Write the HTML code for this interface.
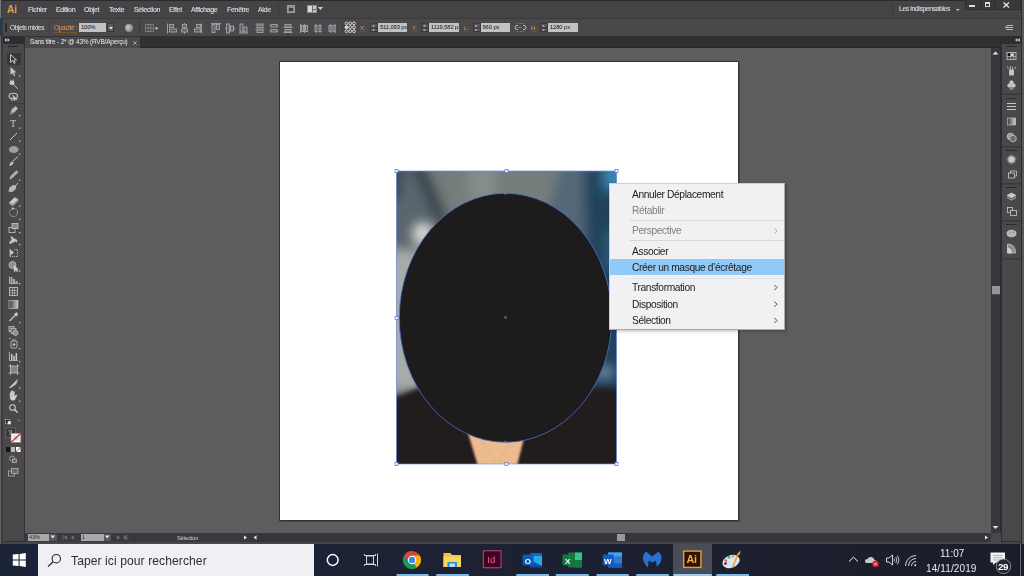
<!DOCTYPE html>
<html><head><meta charset="utf-8">
<style>
*{margin:0;padding:0;box-sizing:border-box}
html,body{width:1024px;height:576px;overflow:hidden;background:#2f2d30;font-family:"Liberation Sans",sans-serif;position:relative}
.a{position:absolute}
.t{position:absolute;white-space:nowrap;line-height:1;will-change:transform}
svg{position:absolute;overflow:visible}
.mt{color:#dddce0;font-size:7px;top:6.4px;letter-spacing:-0.3px;font-weight:normal;-webkit-text-stroke:0.15px #dddce0}
.sep{position:absolute;width:1px;background:#353337}
.inp{position:absolute;background:#c2c1c4;height:9px;top:23px;color:#111;font-size:5.8px;line-height:9.5px;padding-left:2px;letter-spacing:-0.1px;overflow:hidden;white-space:nowrap}
.spin{position:absolute;background:#575558;height:9px;top:23px;width:8px;border:1px solid #3a383b}
.ol{color:#e39a3a;font-size:6px;top:25px}
.cm{font-size:10.2px;color:#1b1b1d;letter-spacing:-0.36px}
.dis{color:#7e7e81}
</style></head><body>
<!-- left edge -->
<div class="a" style="left:0;top:0;width:3px;height:576px;background:#3c3a3d"></div>
<div class="a" style="left:0;top:0;width:1.3px;height:576px;background:#636164"></div>
<div class="a" style="left:0;top:0;width:1.3px;height:18px;background:#7a797c"></div>
<div class="a" style="left:0;top:18px;width:1.8px;height:18px;background:#1d3b5c"></div>

<!-- MENUBAR -->
<div class="a" style="left:2px;top:0;width:1019px;height:18px;background:#454346"></div>
<div class="a" style="left:2px;top:0;width:1022px;height:1px;background:#2c2a2d"></div>
<div class="t" style="left:7px;top:4px;font-size:10.5px;font-weight:bold;color:#e0a040;letter-spacing:-0.3px">Ai</div>
<div class="t mt" style="left:28px">Fichier</div>
<div class="t mt" style="left:56px">Edition</div>
<div class="t mt" style="left:84px">Objet</div>
<div class="t mt" style="left:109px">Texte</div>
<div class="t mt" style="left:134px">Sélection</div>
<div class="t mt" style="left:169px">Effet</div>
<div class="t mt" style="left:191px">Affichage</div>
<div class="t mt" style="left:227px">Fenêtre</div>
<div class="t mt" style="left:257.5px">Aide</div>
<div class="sep" style="left:278px;top:3px;height:13px;background:#3a383b"></div>
<!-- bridge icon -->
<div class="a" style="left:286.6px;top:4.9px;width:8.3px;height:8.5px;background:#8b8a8d;border:0.6px solid #9e9da0"></div>
<div class="a" style="left:289px;top:7.8px;width:3.6px;height:2.8px;background:#3e3d40"></div>
<!-- arrange docs icon -->
<div class="a" style="left:307px;top:5px;width:10px;height:8.4px;background:#6d6c6f;border:0.7px solid #8e8d90"></div>
<div class="a" style="left:308.3px;top:6.3px;width:3.6px;height:5.8px;background:#d8d7da"></div>
<div class="a" style="left:312.8px;top:6.3px;width:3px;height:2.4px;background:#c6c5c8"></div>
<div class="a" style="left:312.8px;top:9.7px;width:3px;height:2.4px;background:#c6c5c8"></div>
<svg style="left:318px;top:7px" width="5" height="4"><path d="M0 0H5L2.5 3Z" fill="#d0cfd2"/></svg>

<div class="sep" style="left:892px;top:3px;height:13px;background:#3a383b"></div>
<div class="t mt" style="left:899px;top:6.3px;color:#d4d3d6;font-size:6.9px;letter-spacing:-0.42px">Les indispensables</div>
<svg style="left:955.5px;top:8.5px" width="4" height="3"><path d="M0 0H3.6L1.8 2Z" fill="#d0cfd2"/></svg>
<!-- window buttons -->
<div class="a" style="left:965px;top:0;width:56px;height:10px;background:#3a383b;border:1px solid #2e2c2f;border-top:none"></div>
<div class="a" style="left:980px;top:0;width:1px;height:10px;background:#2e2c2f"></div>
<div class="a" style="left:994px;top:0;width:1px;height:10px;background:#2e2c2f"></div>
<div class="a" style="left:969px;top:5px;width:6px;height:2px;background:#dcdbde"></div>
<div class="a" style="left:985px;top:2px;width:5px;height:5px;border:1px solid #dcdbde;border-top-width:2px"></div>
<svg style="left:1003px;top:2px" width="7" height="6"><path d="M0.5 0.5L6 5.5M6 0.5L0.5 5.5" stroke="#e4e3e6" stroke-width="1.3"/></svg>
<div class="a" style="left:1021px;top:0;width:3px;height:576px;background:#5a585b"></div>
<div class="a" style="left:1021px;top:0;width:1px;height:576px;background:#2e2c2f"></div>

<!-- CONTROL BAR -->
<div class="a" style="left:3px;top:18px;width:1018px;height:18px;background:#4a484b;border-top:1px solid #3c3a3d"></div>
<div class="a" style="left:5px;top:23px;width:2px;height:9px;background:#2e2c2f"></div>
<div class="t" style="left:10px;top:24.6px;font-size:6.6px;color:#e4e3e6;letter-spacing:-0.45px">Objets mixtes</div>
<div class="sep" style="left:49px;top:21px;height:13px;background:#3d3b3e"></div>
<div class="t ol" style="left:54px;top:24.6px;font-size:6.6px;color:#e49a3c;letter-spacing:-0.35px;padding-bottom:0.3px;border-bottom:1px solid #7a5530">Opacité :</div>
<div class="inp" style="left:79px;width:27px">100%</div>
<div class="a" style="left:107px;top:23px;width:7px;height:9px;background:#5c5a5d;border:1px solid #3a383b"></div>
<svg style="left:108.5px;top:26.5px" width="4" height="3"><path d="M0 0H4L2 2.5Z" fill="#e8e7ea"/></svg>
<!-- globe -->
<div class="a" style="left:124.5px;top:24px;width:8px;height:8px;border-radius:50%;background:radial-gradient(circle at 40% 40%,#c9c8cb,#6a696c)"></div>
<div class="sep" style="left:139px;top:21px;height:13px;background:#3d3b3e"></div>
<svg style="left:0;top:0" width="1024" height="40">
<g fill="none" stroke="#b3b2b5" stroke-width="1">
<!-- grid icon -->
<rect x="145.5" y="24.5" width="8" height="7" stroke-dasharray="1 1" stroke="#a6a5a8"/>
<path d="M148.2 24.5V31.5M150.8 24.5V31.5M145.5 28H153.5" stroke-dasharray="1 1" stroke="#a6a5a8"/>
</g>
<path d="M154.5 27.5H158.5L156.5 30Z" fill="#c4c3c6"/>
<g fill="#605e61" stroke="#a6a5a8" stroke-width="0.9">
<!-- align left -->
<path d="M167.5 23.5V33.5" fill="none"/><rect x="169.5" y="24.5" width="4" height="3"/><rect x="169.5" y="29" width="7" height="3"/>
<!-- align center h -->
<path d="M184.5 23V34" fill="none"/><rect x="182.5" y="24.5" width="4" height="3"/><rect x="181.5" y="29" width="6" height="3"/>
<!-- align right -->
<path d="M201.5 23.5V33.5" fill="none"/><rect x="196.5" y="24.5" width="4" height="3"/><rect x="194.5" y="29" width="6" height="3"/>
<!-- align top -->
<path d="M211 23.5H221" fill="none"/><rect x="212" y="24.5" width="3" height="8"/><rect x="216.5" y="24.5" width="3" height="5"/>
<!-- align center v -->
<path d="M225 28.5H235" fill="none"/><rect x="226.5" y="24" width="3" height="9"/><rect x="230.5" y="26" width="3" height="5"/>
<!-- align bottom -->
<path d="M239 33H248" fill="none"/><rect x="240" y="24" width="3" height="8"/><rect x="244" y="27" width="3" height="5"/>
<!-- distribute top -->
<path d="M255.5 24H264.5M255.5 29H264.5" fill="none"/><rect x="257" y="25" width="6" height="2.5"/><rect x="257" y="30" width="6" height="2.5"/>
<!-- distribute center -->
<path d="M269.5 26H278.5M269.5 31H278.5" fill="none"/><rect x="271" y="24.5" width="6" height="2.5"/><rect x="271" y="29.5" width="6" height="2.5"/>
<!-- distribute bottom -->
<path d="M283.5 27.5H292.5M283.5 32.5H292.5" fill="none"/><rect x="285" y="24.5" width="6" height="2.5"/><rect x="285" y="29.5" width="6" height="2.5"/>
<!-- distribute left -->
<path d="M300.5 24V33M304.5 24V33" fill="none"/><rect x="301.5" y="25.5" width="2" height="6"/><rect x="305.5" y="25.5" width="2" height="6"/>
<!-- distribute center h -->
<path d="M316 24V33M320 24V33" fill="none"/><rect x="315" y="25.5" width="2" height="6"/><rect x="319" y="25.5" width="2" height="6"/>
<!-- distribute right -->
<path d="M331 24V33M335 24V33" fill="none"/><rect x="329" y="25.5" width="2" height="6"/><rect x="333" y="25.5" width="2" height="6"/>
</g>
<!-- reference point -->
<g fill="#48464a" stroke="#d2d1d4" stroke-width="1">
<path d="M346.5 23.4H354M346.5 31.2H354M346.5 23.4V31.2M354 23.4V31.2M350.2 23.4V31.2M346.5 27.3H354" stroke="#9d9c9f" stroke-width="0.8"/>
<circle cx="346.5" cy="23.4" r="1.4"/><circle cx="350.2" cy="23.4" r="1.4"/><circle cx="354" cy="23.4" r="1.4"/>
<circle cx="350.2" cy="27.3" r="1.4"/><circle cx="354" cy="27.3" r="1.4"/>
<circle cx="346.5" cy="31.2" r="1.4"/><circle cx="350.2" cy="31.2" r="1.4"/><circle cx="354" cy="31.2" r="1.4"/>
</g>
<circle cx="346.5" cy="27.3" r="1.8" fill="#dcdbde"/>
<!-- chain -->
<g fill="none" stroke="#bdbcbf" stroke-width="1">
<path d="M518 25.5H517A1.5 1.5 0 0 0 517 29.5H518M523 25.5H524A1.5 1.5 0 0 1 524 29.5H523"/>
<path d="M518.5 27.5H522.5" stroke-dasharray="1 1"/>
<path d="M518 23V24M520.5 23V24M523 23V24M518 31V32M520.5 31V32M523 31V32" stroke="#8a898c"/>
</g>
<!-- right control icon -->
<g fill="#b9b8bb">
<rect x="1007" y="25" width="6" height="1"/><rect x="1006" y="27" width="7" height="1"/><rect x="1006" y="29" width="7" height="1"/>
<path d="M1004.5 26.5H1008L1006.2 28.5Z"/>
</g>
</svg>
<div class="sep" style="left:341.5px;top:21px;height:13px;background:#3d3b3e"></div>
<div class="t ol" style="left:360px;border-bottom:1px solid #6e5032">X:</div>
<div class="spin" style="left:370px"></div>
<div class="inp" style="left:378px;width:29px">511,093 px</div>
<div class="t ol" style="left:412px;border-bottom:1px solid #6e5032">Y:</div>
<div class="spin" style="left:421px"></div>
<div class="inp" style="left:429px;width:30px">1119,582 px</div>
<div class="t ol" style="left:464px;border-bottom:1px solid #6e5032">L:</div>
<div class="spin" style="left:472.5px"></div>
<div class="inp" style="left:480.5px;width:29px">960 px</div>
<div class="t ol" style="left:530.5px;border-bottom:1px solid #6e5032">H:</div>
<div class="spin" style="left:540px"></div>
<div class="inp" style="left:548px;width:30px">1280 px</div>
<svg style="left:0;top:0" width="600" height="40">
<g fill="#cfcecf">
<path d="M372 26.5H375L373.5 25Z"/><path d="M372 29.5H375L373.5 31Z"/>
<path d="M423 26.5H426L424.5 25Z"/><path d="M423 29.5H426L424.5 31Z"/>
<path d="M474.5 26.5H477.5L476 25Z"/><path d="M474.5 29.5H477.5L476 31Z"/>
<path d="M542 26.5H545L543.5 25Z"/><path d="M542 29.5H545L543.5 31Z"/>
</g>
<g stroke="#2e2c2f" stroke-width="1"><path d="M371 28H377M422 28H428M473.5 28H479.5M541 28H547"/></g>
</svg>
<!-- TAB BAR -->
<div class="a" style="left:3px;top:36px;width:998px;height:12px;background:#323033"></div>
<div class="a" style="left:25px;top:47px;width:976px;height:1px;background:#2a282b"></div>
<div class="a" style="left:25px;top:37px;width:115px;height:11px;background:#4a484b"></div>
<div class="t" style="left:30px;top:39.3px;font-size:6.5px;color:#ebeaed;letter-spacing:-0.2px">Sans titre - 2* @ 43% (RVB/Aperçu)</div>
<svg style="left:133px;top:41px" width="4" height="4"><path d="M0.3 0.3L3.7 3.7M3.7 0.3L0.3 3.7" stroke="#a9a8ab" stroke-width="0.9"/></svg>

<!-- CANVAS -->
<div class="a" style="left:25px;top:48px;width:966px;height:485px;background:#5f5c60"></div>
<!-- artboard -->
<div class="a" style="left:279px;top:61px;width:459.5px;height:460px;background:#ffffff;border:1px solid #343135;border-right-color:#3a373b;box-shadow:0.5px 0.5px 1px rgba(40,38,42,0.4)"></div>
<!-- PHOTO -->
<svg style="left:0;top:0" width="1024" height="576">
<defs>
<filter id="bl" x="-50%" y="-50%" width="200%" height="200%"><feGaussianBlur stdDeviation="6"/></filter>
<filter id="bl2" x="-50%" y="-50%" width="200%" height="200%"><feGaussianBlur stdDeviation="2.5"/></filter>
<filter id="bl3" x="-50%" y="-50%" width="200%" height="200%"><feGaussianBlur stdDeviation="0.8"/></filter>
<clipPath id="ph"><rect x="396.5" y="171" width="220" height="293"/></clipPath>
</defs>
<g clip-path="url(#ph)">
<rect x="390" y="165" width="235" height="305" fill="#6a7476"/>
<g filter="url(#bl)">
<path d="M380 160H412L440 220L420 260H380Z" fill="#5a666d"/>
<path d="M380 160H405L400 200H380Z" fill="#3b4850"/>
<path d="M410 165L424 165L450 220L438 224Z" fill="#34414a"/>
<path d="M430 165L570 165L548 225L450 225Z" fill="#737d7c"/>
<path d="M466 165L498 165L494 215L472 215Z" fill="#838d8c"/>
<path d="M562 165L640 165L640 300L545 300L546 215Z" fill="#536878"/>
<path d="M584 165L640 165L640 400L588 400Z" fill="#23425b"/>
<rect x="604" y="165" width="20" height="25" fill="#3a87b2"/>
<rect x="606" y="230" width="14" height="40" fill="#2e5f80"/>
<ellipse cx="423" cy="234" rx="9" ry="10" fill="#e2e5e3"/>
<rect x="385" y="250" width="40" height="140" fill="#a7aca9"/>
<ellipse cx="604" cy="372" rx="9" ry="5" fill="#7096ab"/>
</g>
<g filter="url(#bl2)">
<path d="M380 398L396 396.5Q408 392 420 387L470 400L540 400L592 388Q608 386 630 390L630 480L380 480Z" fill="#201d1f"/>
<path d="M405 400L412 470M430 396L440 470" stroke="#262324" stroke-width="3"/>
</g>
<g filter="url(#bl3)"><path d="M467 430L526 430L517 466L478 466Z" fill="#ecbb8e"/></g>
<path d="M478 436L496 462M514 436L498 462" stroke="#c9a080" stroke-width="0.4" fill="none"/>
</g>
<!-- ellipse -->
<ellipse cx="505.5" cy="317.8" rx="106.2" ry="124.5" fill="#1e1b1d" stroke="#4a70d0" stroke-width="0.8"/>
<!-- bounding box -->
<rect x="396.5" y="171" width="220" height="293" fill="none" stroke="#7090e8" stroke-width="0.7"/>
<g fill="#ffffff" stroke="#5b7ee0" stroke-width="0.8">
<rect x="395" y="169.5" width="3" height="3"/><rect x="505" y="169.5" width="3" height="3"/><rect x="615" y="169.5" width="3" height="3"/>
<rect x="395" y="316.3" width="3" height="3"/><rect x="615" y="316.3" width="3" height="3"/>
<rect x="395" y="462.5" width="3" height="3"/><rect x="505" y="462.5" width="3" height="3"/><rect x="615" y="462.5" width="3" height="3"/>
</g>
<rect x="504.5" y="316.5" width="2" height="2" fill="#5b7ee0"/>
<rect x="504.5" y="192.5" width="2" height="2" fill="#5b7ee0"/>
<rect x="504.5" y="441" width="2" height="2" fill="#5b7ee0"/>
</svg>
<!-- CONTEXT MENU -->
<div class="a" style="left:609px;top:184px;width:178px;height:148px;background:rgba(0,0,0,0.18);filter:blur(1px)"></div>
<div class="a" style="left:608.5px;top:183px;width:176.5px;height:147px;background:#f1f0f3;border:1px solid #cfcfd2;border-right-color:#a9a9ac;border-bottom-color:#a9a9ac"></div>
<div class="a" style="left:610px;top:258.5px;width:174px;height:16.5px;background:#91c9f7"></div>
<div class="a" style="left:630px;top:220px;width:154px;height:1px;background:#d6d6d9"></div>
<div class="a" style="left:630px;top:240px;width:154px;height:1px;background:#d6d6d9"></div>
<div class="a" style="left:630px;top:278px;width:154px;height:1px;background:#e2e2e5"></div>
<div class="t cm" style="left:632px;top:189.8px">Annuler Déplacement</div>
<div class="t cm dis" style="left:632px;top:206.3px">Rétablir</div>
<div class="t cm dis" style="left:632px;top:226.3px">Perspective</div>
<div class="t cm" style="left:632px;top:246.6px">Associer</div>
<div class="t cm" style="left:632px;top:263.0px">Créer un masque d’écrêtage</div>
<div class="t cm" style="left:632px;top:283.3px">Transformation</div>
<div class="t cm" style="left:632px;top:299.9px">Disposition</div>
<div class="t cm" style="left:632px;top:316.1px">Sélection</div>
<svg style="left:0;top:0" width="1024" height="576">
<g fill="none" stroke-width="0.9">
<path d="M774.5 228.5L777 231L774.5 233.5" stroke="#a8a8ab"/>
<path d="M774.5 285L777 287.5L774.5 290" stroke="#333"/>
<path d="M774.5 301.7L777 304.2L774.5 306.7" stroke="#333"/>
<path d="M774.5 318L777 320.5L774.5 323" stroke="#333"/>
</g>
</svg>
<!-- LEFT TOOLBAR -->
<div class="a" style="left:3px;top:36px;width:22px;height:505px;background:#4a484b"></div>
<div class="a" style="left:3px;top:36px;width:22px;height:8px;background:#2f2d30"></div>
<div class="a" style="left:24px;top:44px;width:1px;height:497px;background:#343235"></div>
<div class="a" style="left:8px;top:46px;width:10px;height:1px;background:#242225"></div>
<div class="a" style="left:6.5px;top:53px;width:14px;height:11.5px;background:#39373a"></div>
<div class="a" style="left:5px;top:103px;width:19px;height:1px;background:#3f3d40"></div>
<svg style="left:0;top:0" width="30" height="576">
<path d="M5 38.3V41.7L7.3 40ZM7.5 38.3V41.7L9.8 40Z" fill="#d8d7da"/>
<g fill="none" stroke="#d0cfd2" stroke-width="0.9">
<!-- selection outline -->
<path d="M10.5 54.5V62.5L12.5 60.5L14 63.5L15.3 62.8L13.8 60H16.5Z"/>
</g>
<g fill="#c8c7ca">
<!-- direct selection -->
<path d="M10.5 67V75L12.5 73L14 76L15.3 75.3L13.8 72.5H16.5Z"/>
</g>
<g fill="#c2c1c4">
<!-- corner dots -->
<rect x="19" y="75.5" width="1.3" height="1.3"/>
<rect x="19" y="115" width="1.3" height="1.3"/>
<rect x="19" y="127.5" width="1.3" height="1.3"/>
<rect x="19" y="140.5" width="1.3" height="1.3"/>
<rect x="19" y="153.5" width="1.3" height="1.3"/>
<rect x="19" y="179.5" width="1.3" height="1.3"/>
<rect x="19" y="205.5" width="1.3" height="1.3"/>
<rect x="19" y="218.5" width="1.3" height="1.3"/>
<rect x="19" y="232" width="1.3" height="1.3"/>
<rect x="19" y="244" width="1.3" height="1.3"/>
<rect x="19" y="270.5" width="1.3" height="1.3"/>
<rect x="19" y="283" width="1.3" height="1.3"/>
<rect x="19" y="322" width="1.3" height="1.3"/>
<rect x="19" y="348" width="1.3" height="1.3"/>
<rect x="19" y="361" width="1.3" height="1.3"/>
<rect x="19" y="387.5" width="1.3" height="1.3"/>
<rect x="19" y="400.5" width="1.3" height="1.3"/>
</g>
<g stroke="#c8c7ca" fill="none" stroke-width="1">
<!-- magic wand -->
<path d="M13 84L17.8 88.8" stroke-width="0.9"/>
<circle cx="12" cy="82.8" r="2.4" fill="#c8c7ca" stroke="none"/>
<path d="M10.5 79.5L11.2 81M13.8 79.5L13 81M9 83H9.8M15 83H14.2" stroke-width="0.7"/>
<!-- lasso -->
<ellipse cx="13.3" cy="96" rx="4.2" ry="2.8" stroke-width="1.1"/>
<path d="M12.5 95L14.2 101L15.2 99.3L17.5 99.5Z" fill="#c8c7ca" stroke-width="0.4"/>
<path d="M11.5 98.5L12 101" stroke-width="0.9"/>
<!-- pen -->
<path d="M10.5 114.5L12 109.5L15.5 106.5L17.5 108.5L14.5 112Z" fill="#bdbcbf" stroke-width="0.6"/>
<path d="M10.5 114.5L13 111.8" stroke="#4a484b" stroke-width="0.7"/>
<!-- line -->
<path d="M10 140L17 133" stroke-width="1"/>
</g>
<!-- type T -->
<text x="10.2" y="127" font-family="Liberation Serif" font-size="9.5" fill="#d0cfd2">T</text>
<g fill="#9e9da0">
<!-- ellipse -->
<ellipse cx="13.7" cy="149.5" rx="4.8" ry="3.6"/>
</g>
<g stroke="#c8c7ca" fill="none">
<!-- brush -->
<path d="M13 161L18 156.5" stroke-width="1"/>
<path d="M9.5 165.8Q10 162.5 12.3 161.5L13.5 162.8Q12.5 165.5 9.5 165.8Z" fill="#c8c7ca" stroke-width="0.4"/>
<!-- pencil -->
<path d="M10 179L11 176L16.5 170.8L18 172.3L12.5 177.5Z" fill="#a9a8ab" stroke-width="0.7"/>
<!-- blob brush -->
<path d="M9 191.5L9.8 187.5L13 185.5Q15 185 16 186.5L15 189.5L12.5 191.5Z" fill="#b6b5b8" stroke-width="0.6"/>
<path d="M14 187.5L18 183" stroke-width="0.9"/>
<!-- eraser -->
<path d="M9.5 202.5L14.5 197.5L18 199.5L13 204.5Z" fill="#c8c7ca" stroke-width="0.6"/>
<path d="M9.5 202.5L13 204.5L18 199.5V201L13 206L9.5 204Z" fill="#8a898c" stroke-width="0.3"/>
<!-- rotate -->
<circle cx="13.5" cy="212.5" r="4" stroke-dasharray="1.3 1" stroke-width="1"/>
<path d="M12 207.5L14 208.5L12 209.8" fill="#c8c7ca" stroke-width="0.5"/>
<!-- scale -->
<rect x="9" y="227.5" width="6" height="5" stroke-width="0.8"/>
<rect x="12" y="223.5" width="6" height="5" fill="#8a898c" stroke-width="0.8"/>
<!-- warp -->
<path d="M9.5 242.5Q10.5 240.5 12 240Q11.5 238 10.8 236.5Q13.2 236.8 14 239Q15.5 238.5 16.8 240Q17.5 242 16.2 242.2Q15.5 240.8 14.5 241.5Q13 243 11.5 242.5Q10.5 243.5 9.5 242.5Z" fill="#c8c7ca" stroke-width="0.5"/>
<circle cx="10.5" cy="243" r="1" fill="#c8c7ca" stroke="none"/>
<!-- free transform -->
<path d="M10 249V256.5M10 252.5H12M14 249.5H17.5V256.5M10 256.5H17.5" stroke-width="0.8" stroke-dasharray="1.2 0.8"/>
<path d="M10 249.5L14 252.5L10 255.5Z" fill="#c8c7ca" stroke-width="0.3"/>
<!-- shape builder -->
<circle cx="12.5" cy="265" r="3.5" fill="#8f8e91" stroke-width="0.7"/>
<path d="M14 265L14 272L15.8 270.5L17.5 272L18 271L16.5 269.5H18.5Z" fill="#d0cfd2" stroke-width="0.3"/>
<!-- perspective / bars -->
<path d="M9.5 276.5V283.5H18" stroke-width="0.8"/>
<rect x="10.5" y="277" width="2" height="6" fill="#a6a5a8" stroke="none"/>
<rect x="13" y="279" width="2" height="4" fill="#a6a5a8" stroke="none"/>
<rect x="15.5" y="281" width="2" height="2" fill="#a6a5a8" stroke="none"/>
<!-- mesh -->
<rect x="9.5" y="287.5" width="8" height="8" stroke-width="0.8"/>
<path d="M9.5 290.5H17.5M9.5 293H17.5M12.5 287.5V295.5M14.5 287.5V295.5" stroke-width="0.6"/>
<!-- gradient -->
</g>
<defs><linearGradient id="gr" x1="0" x2="1"><stop offset="0" stop-color="#3e3d40"/><stop offset="1" stop-color="#c9c8cb"/></linearGradient></defs>
<rect x="9" y="300.5" width="9" height="8" fill="url(#gr)" stroke="#c8c7ca" stroke-width="0.6"/>
<g stroke="#c8c7ca" fill="none">
<!-- eyedropper -->
<path d="M9.5 321L14.5 316" stroke-width="1.2"/>
<path d="M14 314.5L16.5 312.5L18 314L16 316.5Z" fill="#c8c7ca" stroke-width="0.6"/>
<!-- blend -->
<rect x="9" y="326.5" width="5" height="5" fill="#6e6d70" stroke-width="0.7"/>
<rect x="11" y="328.5" width="5" height="5" fill="#6e6d70" stroke-width="0.7"/>
<circle cx="15.5" cy="333" r="2.5" fill="#8b8a8d" stroke-width="0.7"/>
<!-- symbol sprayer -->
<rect x="11" y="341" width="6" height="7" rx="1" stroke-width="0.8"/>
<path d="M13 339V341M15 339V341M9 338.5H11" stroke-width="0.7"/>
<circle cx="14" cy="344.5" r="1.3" fill="#c8c7ca" stroke="none"/>
<!-- graph -->
<path d="M9.5 352V360.5H18" stroke-width="0.8"/>
<rect x="11" y="354" width="1.5" height="6" fill="#c8c7ca" stroke="none"/>
<rect x="13.3" y="356" width="1.5" height="4" fill="#c8c7ca" stroke="none"/>
<rect x="15.6" y="353" width="1.5" height="7" fill="#c8c7ca" stroke="none"/>
<!-- artboard -->
<rect x="10.5" y="366" width="7" height="7" fill="#858487" stroke="none"/>
<path d="M8.5 366H19.5M8.5 373H19.5M10.5 364V375M17.5 364V375" stroke-width="0.7"/>
<!-- slice -->
<path d="M9.5 387.5L17.5 379.5L16 384L11 387.5Z" fill="#c8c7ca" stroke-width="0.6"/>
<!-- hand -->
<path d="M10 397V393.5Q10 392.5 11 392.5V396M11 396V391.5Q11.2 390.8 12 391V395.5M12 395.5V391Q12.5 390.3 13.2 391V395.5M13.2 395.5V391.8Q13.8 391.2 14.4 391.8V396.5L15.8 395Q16.8 394.5 17 395.4L14.5 400.2H11.5Q10 399.5 10 397Z" fill="#d0cfd2" stroke-width="0.4"/>
<!-- zoom -->
<circle cx="12.5" cy="407.5" r="2.8" stroke-width="1.1"/>
<path d="M14.5 409.5L17.5 412.5" stroke-width="1.6"/>
</g>
<!-- swap/default -->
<rect x="5.5" y="419.5" width="4" height="4" fill="#111" stroke="#ddd" stroke-width="0.5"/>
<rect x="7.5" y="421" width="3.5" height="3.5" fill="#eee" stroke="#444" stroke-width="0.4"/>
<path d="M17 419.5Q19.5 419.5 19.5 422" fill="none" stroke="#8e8d90" stroke-width="0.7"/>
<!-- fill/stroke -->
<rect x="5.8" y="428" width="9.8" height="9.5" fill="#3a383b" stroke="#6d6c6f" stroke-width="0.7"/>
<text x="8.3" y="435" font-size="7" fill="#e2e1e4" font-family="Liberation Sans">?</text>
<rect x="11" y="433.3" width="9.8" height="9.1" fill="#f4f4f4" stroke="#8d8c8f" stroke-width="0.5"/>
<rect x="13.3" y="435.6" width="5.2" height="4.5" fill="#d8d8d8"/>
<path d="M10.8 442.6L21 433.2" stroke="#e02020" stroke-width="1.2"/>
<!-- color modes -->
<rect x="6" y="447" width="4" height="5" fill="#141414"/>
<rect x="11" y="447" width="4" height="5" fill="#b9b8bb"/>
<rect x="16" y="447" width="4.5" height="5" fill="#ffffff"/>
<path d="M16 452L20.5 447" stroke="#e02020" stroke-width="0.9"/>
<!-- drawing modes -->
<g fill="none" stroke="#b3b2b5" stroke-width="0.8">
<circle cx="12" cy="458.5" r="2.5"/><rect x="12.5" y="459" width="4" height="3.5" fill="#6a696c"/>
<!-- screen mode -->
<rect x="8.5" y="471" width="6" height="5"/><rect x="11.5" y="468.5" width="6.5" height="5" fill="#6a696c"/>
</g>
</svg>
<!-- RIGHT DOCK -->
<div class="a" style="left:991px;top:48px;width:9px;height:485px;background:#38363a"></div>
<div class="a" style="left:1000px;top:36px;width:2px;height:505px;background:#2e2c2f"></div>
<div class="a" style="left:1002px;top:36px;width:19px;height:505px;background:#4a484b"></div>
<div class="a" style="left:1002px;top:36px;width:19px;height:8px;background:#2f2d30"></div>
<svg style="left:0;top:0" width="1024" height="576">
<path d="M1017.3 38.3V41.7L1015 40ZM1019.8 38.3V41.7L1017.5 40Z" fill="#d8d7da"/>
<!-- scroll arrows -->
<path d="M992.5 54.5H998.5L995.5 51.5Z" fill="#e0dfe2"/>
<path d="M992.5 526H998.5L995.5 529Z" fill="#e0dfe2"/>
<rect x="992" y="286" width="8" height="8.3" fill="#959496"/>
<!-- group separators -->
<g fill="#3a383b">
<rect x="1002" y="93.5" width="19" height="1.5"/>
<rect x="1002" y="146" width="19" height="1.5"/>
<rect x="1002" y="183" width="19" height="1.5"/>
<rect x="1002" y="220" width="19" height="1.5"/>
<rect x="1002" y="258" width="19" height="1.5"/>
</g>
<g fill="#2a282b">
<rect x="1006" y="46" width="11" height="1"/>
<rect x="1006" y="98" width="11" height="1"/>
<rect x="1006" y="150" width="11" height="1"/>
<rect x="1006" y="187" width="11" height="1"/>
<rect x="1006" y="224" width="11" height="1"/>
</g>
<!-- swatches -->
<rect x="1007" y="52.5" width="9" height="7" fill="none" stroke="#c8c7ca" stroke-width="0.8"/>
<rect x="1008" y="53.5" width="2.5" height="2.5" fill="#111"/><rect x="1011" y="53.5" width="2.5" height="2.5" fill="#ddd"/>
<path d="M1007 56.5H1016M1010.5 52.5V59.5M1013.5 52.5V59.5" stroke="#c8c7ca" stroke-width="0.6"/>
<g fill="none" stroke="#c8c7ca" stroke-width="0.8">
<!-- brushes -->
<rect x="1009.5" y="70" width="4" height="5" fill="#c8c7ca"/>
<path d="M1010.5 70V66M1012.5 70V66.5M1014.5 69L1016 66.5M1008.5 69L1007.5 66.5"/>
<!-- symbols club -->
<circle cx="1011.5" cy="82.5" r="1.8" fill="#c8c7ca"/><circle cx="1009.5" cy="85.5" r="1.8" fill="#c8c7ca"/><circle cx="1013.5" cy="85.5" r="1.8" fill="#c8c7ca"/>
<path d="M1011.5 85V89M1009.5 89H1013.5"/>
<!-- stroke lines -->
<path d="M1007 103.5H1016M1007 106.5H1016M1007 109.5H1016" stroke-width="1.1"/>
<!-- gradient -->
</g>
<defs><linearGradient id="gr2" x1="0" x2="1"><stop offset="0" stop-color="#3e3d40"/><stop offset="1" stop-color="#d0cfd2"/></linearGradient></defs>
<rect x="1007.5" y="118" width="8" height="7" fill="url(#gr2)" stroke="#c8c7ca" stroke-width="0.6"/>
<g fill="none" stroke="#c8c7ca" stroke-width="0.8">
<!-- transparency -->
<circle cx="1010.5" cy="136.5" r="3.3" fill="#9a999c"/>
<circle cx="1013" cy="138.5" r="3.3" fill="#6c6b6e"/>
<!-- appearance -->
<circle cx="1011.5" cy="159.5" r="3.2" fill="#c8c7ca" stroke-dasharray="1 0.8"/>
<circle cx="1011.5" cy="159.5" r="4.3" stroke-dasharray="0.8 0.8"/>
<!-- graphic styles -->
<rect x="1008.5" y="173" width="6" height="5"/>
<path d="M1010.5 173V171H1016.5V176H1014.5"/>
<!-- layers -->
<path d="M1011.5 193L1016 195.5L1011.5 198L1007 195.5Z" fill="#c8c7ca"/>
<path d="M1007 197.5L1011.5 200L1016 197.5"/>
<!-- artboards -->
<rect x="1007.5" y="207.5" width="5" height="5"/><rect x="1010.5" y="210.5" width="6" height="5" fill="#4a484b"/>
<!-- color -->
<ellipse cx="1011.5" cy="233.5" rx="4.5" ry="3.3" fill="#b9b8bb"/>
<circle cx="1010" cy="232.5" r="0.9" fill="#444"/><circle cx="1013" cy="232.5" r="0.9" fill="#444"/>
<!-- color guide -->
<path d="M1007.5 253V244Q1015.5 244 1015.5 253Z" fill="#8f8e91"/>
<path d="M1007.5 253V248Q1011.5 248 1011.5 253Z" fill="#d0cfd2"/>
</g>
</svg>

<!-- STATUS BAR -->
<div class="a" style="left:25px;top:533px;width:966px;height:8.5px;background:#3b393c"></div>
<div class="a" style="left:250px;top:533px;width:741px;height:8.5px;background:#373538"></div>
<div class="a" style="left:991px;top:533px;width:10px;height:8.5px;background:#4a484b"></div>
<div class="a" style="left:616.5px;top:533.5px;width:8px;height:7.5px;background:#9a999b"></div>
<div class="a" style="left:28px;top:533.5px;width:21px;height:7.5px;background:#a9a8ab"></div>
<div class="t" style="left:29px;top:535px;font-size:5.5px;color:#2a2a2a">43%</div>
<div class="a" style="left:49px;top:533.5px;width:7.5px;height:7.5px;background:#59575a"></div>
<div class="a" style="left:80.5px;top:533.5px;width:23px;height:7.5px;background:#a9a8ab"></div>
<div class="t" style="left:82px;top:535px;font-size:5.5px;color:#2a2a2a">1</div>
<div class="a" style="left:103.5px;top:533.5px;width:7.5px;height:7.5px;background:#59575a"></div>
<div class="a" style="left:133.5px;top:533px;width:1px;height:8.5px;background:#2f2d30"></div>
<div class="t" style="left:176.5px;top:535.8px;font-size:5.6px;color:#d5d4d7;letter-spacing:-0.22px">Sélection</div>
<div class="a" style="left:3px;top:541.5px;width:1018px;height:2px;background:#48464a"></div>
<svg style="left:0;top:0" width="1024" height="576">
<path d="M50.5 535.5H55L52.75 538.5Z" fill="#e8e7ea"/>
<path d="M105 535.5H109.5L107.25 538.5Z" fill="#e8e7ea"/>
<g fill="#6f6e71"><path d="M63 535V540M64 537.5L67 535V540Z"/><path d="M74 535V540L71 537.5Z"/><path d="M117 535V540L120 537.5Z"/><path d="M126 535V540L123 537.5ZM127 535V540"/></g>
<g stroke="#6f6e71" stroke-width="0.8"><path d="M63 535V540M127 535V540"/></g>
<path d="M244 535.5V539.5L247 537.5Z" fill="#e8e7ea"/>
<path d="M256.5 535.3V539.7L253.5 537.5Z" fill="#e8e7ea"/>
<path d="M985 535.5V539.5L988 537.5Z" fill="#e8e7ea"/>
</svg>
<!-- TASKBAR -->
<div class="a" style="left:0;top:543.5px;width:1024px;height:32.5px;background:linear-gradient(90deg,#1b2339 0%,#1c2234 40%,#1c202e 75%,#1a1e2a 100%)"></div>
<div class="a" style="left:37.5px;top:543.5px;width:276px;height:32.5px;background:#f0eff3"></div>
<div class="t" style="left:71px;top:555px;font-size:12.1px;color:#2e2e30;letter-spacing:0.08px">Taper ici pour rechercher</div>
<div class="a" style="left:673.4px;top:543.5px;width:38.5px;height:32.5px;background:#4a4d57"></div>
<svg style="left:0;top:0" width="1024" height="576">
<!-- windows logo -->
<g fill="#ffffff">
<path d="M12.8 554.6L18.6 554V559.6H12.8Z"/><path d="M19.6 553.9L25.8 553V559.6H19.6Z"/>
<path d="M12.8 560.4H18.6V566L12.8 565.4Z"/><path d="M19.6 560.4H25.8V567L19.6 566.1Z"/>
</g>
<!-- search icon -->
<circle cx="56.3" cy="558.7" r="4.2" fill="none" stroke="#2b2b2b" stroke-width="1.1"/>
<path d="M53.3 561.7L48 566.5" stroke="#2b2b2b" stroke-width="1.2"/>
<!-- cortana -->
<circle cx="332.7" cy="560" r="5.4" fill="none" stroke="#ffffff" stroke-width="1.5"/>
<!-- task view -->
<g fill="none" stroke="#d8d8da" stroke-width="1">
<rect x="366.5" y="556" width="7" height="8"/>
<path d="M364.5 554V555.5H375.5V554M364.5 566V564.5H375.5V566M377.5 553.5V566.5"/>
</g>
<!-- chrome -->
<circle cx="412" cy="560" r="9" fill="#db4437"/>
<path d="M412 560L404.2 564.5A9 9 0 0 0 416.5 567.8Z" fill="#0f9d58"/>
<path d="M412 560L416.5 567.8A9 9 0 0 0 419.8 555.5L412 555.5Z" fill="#f4b400"/>
<path d="M412 560L412 551A9 9 0 0 0 404.2 555.5L408.1 562.25Z" fill="#db4437"/>
<path d="M404.2 564.5A9 9 0 0 1 404.2 555.5L408.1 562.25Z" fill="#0f9d58"/>
<circle cx="412" cy="560" r="4.2" fill="#ffffff"/>
<circle cx="412" cy="560" r="3.2" fill="#4285f4"/>
<!-- explorer -->
<path d="M443.5 553H450.5L452 555H461V567H443.5Z" fill="#f5c342"/>
<rect x="443.5" y="556.5" width="17.5" height="10.5" fill="#fbd55b"/>
<rect x="447.5" y="562" width="9.5" height="5" fill="#2b8fd8"/>
<rect x="449.5" y="563.5" width="5.5" height="3.5" fill="#b9dff8"/>
<!-- indesign -->
<rect x="483.3" y="550.8" width="17.7" height="17" fill="#3f0420" stroke="#e8508f" stroke-width="0.8"/>
<text x="487.3" y="563.3" font-family="Liberation Sans" font-size="9.6" fill="#f0609f">Id</text>
<!-- outlook -->
<rect x="530" y="553" width="12" height="14" rx="1" fill="#1066c3"/>
<rect x="533" y="556" width="9" height="10" fill="#28a8ea"/>
<path d="M530 560L542 566V567.5H530Z" fill="#0b4fa8"/>
<rect x="522.5" y="554.5" width="11" height="11" rx="1" fill="#0a5cb8"/>
<text x="524.8" y="563.5" font-family="Liberation Sans" font-size="8" font-weight="bold" fill="#ffffff">O</text>
<!-- excel -->
<rect x="568" y="552.5" width="14" height="15" rx="1" fill="#1d6f42"/>
<rect x="575" y="552.5" width="7" height="7.5" fill="#33c481"/>
<rect x="575" y="560" width="7" height="7.5" fill="#107c41"/>
<rect x="562.5" y="554.5" width="11" height="11" rx="1" fill="#107c41"/>
<text x="565" y="563.5" font-family="Liberation Sans" font-size="8" font-weight="bold" fill="#ffffff">X</text>
<!-- word -->
<rect x="608" y="552.5" width="14" height="15" rx="1" fill="#2b7cd3"/>
<rect x="608" y="552.5" width="14" height="4" fill="#41a5ee"/>
<rect x="608" y="563.5" width="14" height="4" fill="#185abd"/>
<rect x="602.8" y="554.5" width="11" height="11" rx="1" fill="#185abd"/>
<text x="604" y="563.5" font-family="Liberation Sans" font-size="8" font-weight="bold" fill="#ffffff">W</text>
<!-- malwarebytes -->
<path d="M648 567.5Q642.5 562.5 643 557Q643.5 553 646.5 551.8L652.2 556.5L658 551.8Q661 553 661.5 557Q662 562.5 656.8 566.8L656 560.8L652.2 562.5L648.6 560.5Z" fill="#2a6fd2"/>
<!-- illustrator -->
<rect x="683.7" y="551.1" width="17.2" height="16.3" fill="#2e1200" stroke="#e5a030" stroke-width="1.4"/>
<text x="686.6" y="563" font-family="Liberation Sans" font-size="10.8" font-weight="bold" fill="#f2b04a" letter-spacing="-0.3">Ai</text>
<!-- paint -->
<ellipse cx="731" cy="561.5" rx="9" ry="6.3" fill="#d5e6f4" transform="rotate(-22 731 561.5)"/>
<circle cx="725.5" cy="563.5" r="1.3" fill="#1e2436"/>
<circle cx="725.8" cy="560.5" r="1.3" fill="#e45a4a"/><circle cx="729" cy="557.3" r="1.3" fill="#4caa50"/><circle cx="733" cy="556.3" r="1.3" fill="#f0a030"/>
<path d="M732.5 567.5L738.5 553" stroke="#e8a030" stroke-width="1.6"/>
<path d="M737.5 553.5L741 550.5L739.5 555Z" fill="#f0a838"/>
<!-- indicator bars -->
<g fill="#76b9ed">
<rect x="396.6" y="574" width="32" height="2"/>
<rect x="436.2" y="574" width="32.7" height="2"/>
<rect x="516.3" y="574" width="32.7" height="2"/>
<rect x="555.8" y="574" width="33" height="2"/>
<rect x="596.6" y="574" width="32.2" height="2"/>
<rect x="636.2" y="574" width="32.7" height="2"/>
<rect x="673.4" y="574" width="38.4" height="2" fill="#99ccf3"/>
<rect x="716.3" y="574" width="32.7" height="2"/>
</g>
<!-- tray -->
<path d="M849 561.5L853.5 557.2L858 561.5" fill="none" stroke="#ffffff" stroke-width="1"/>
<path d="M866.5 563Q865 563 865 561Q865 559 867.5 559Q868.5 556.5 871.5 557Q874 557.5 874.5 560Q876.5 560 876.5 562Q876.5 563 875 563Z" fill="#c9c9cc"/>
<circle cx="875.5" cy="564" r="3.2" fill="#e81123"/>
<path d="M874.2 562.7L876.8 565.3M876.8 562.7L874.2 565.3" stroke="#fff" stroke-width="0.8"/>
<path d="M886.5 558H889L892.5 555V565L889 562H886.5Z" fill="none" stroke="#e8e8ea" stroke-width="0.9"/>
<path d="M894 558.5Q895.2 560 894 561.5M895.8 557Q898 560 895.8 563M897.5 555.5Q900.5 560 897.5 564.5" fill="none" stroke="#e8e8ea" stroke-width="0.8"/>
<g fill="none" stroke="#e8e8ea" stroke-width="0.9">
<path d="M905.5 566A10.5 10.5 0 0 1 916 555.5"/><path d="M908.5 566A7.5 7.5 0 0 1 916 558.5"/><path d="M911.5 566A4.5 4.5 0 0 1 916 561.5"/>
</g>
<circle cx="915.2" cy="565.2" r="1" fill="#e8e8ea"/>
<!-- notification -->
<path d="M990.5 552.5H1005V562.5H996L993 565V562.5H990.5Z" fill="#f2f2f4"/>
<path d="M993 555.5H1002.5M993 557.7H1002.5M993 559.9H1000" stroke="#8a8a90" stroke-width="0.6"/>
<circle cx="1003.5" cy="566.3" r="7.3" fill="#22252f" stroke="#b0b1b5" stroke-width="0.7"/>
</svg>
<div class="t" style="left:939.5px;top:549.3px;font-size:10px;color:#e9e9eb">11:07</div>
<div class="t" style="left:926px;top:563.8px;font-size:10px;color:#e9e9eb;letter-spacing:0.12px">14/11/2019</div>
<div class="a" style="left:1020px;top:544px;width:1px;height:32px;background:#6a6b72"></div>
<div class="t" style="left:997.8px;top:561.8px;font-size:9.8px;color:#ffffff;font-weight:bold;letter-spacing:-0.5px">29</div>

</body></html>
